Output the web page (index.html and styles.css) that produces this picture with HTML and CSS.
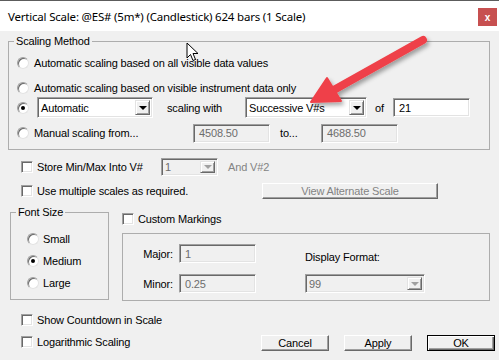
FILE: index.html
```html
<!DOCTYPE html>
<html lang="en">
<head>
  <meta charset="UTF-8">
  <title>Vertical Scale</title>
  <link rel="stylesheet" href="styles.css">
</head>
<body>

  <div class="window">
    <div class="titlebar">
      <span class="title">Vertical Scale: @ES# (5m*) (Candlestick) 624 bars (1 Scale)</span>
      <span class="close">x</span>
    </div>

    <div class="dialog">
      <fieldset class="group scaling">
        <legend>Scaling Method</legend>
        <div class="opt first"><span class="radio"></span>Automatic scaling based on all visible data values</div>
        <div class="opt second"><span class="radio"></span>Automatic scaling based on visible instrument data only</div>
        <div class="opt combo">
          <span class="radio on"></span>
          <div class="select method"><span class="val">Automatic</span><span class="drop"></span></div>
          <span class="lbl with">scaling with</span>
          <div class="select succ"><span class="val">Successive V#s</span><span class="drop"></span></div>
          <span class="lbl of">of</span>
          <div class="field count">21</div>
        </div>
        <div class="opt">
          <span class="radio"></span>
          <span class="lbl manual">Manual scaling from...</span>
          <div class="field off">4508.50</div>
          <span class="lbl to">to...</span>
          <div class="field off">4688.50</div>
        </div>
      </fieldset>

      <div class="checkrow store">
        <span class="check"></span>
        <span class="lbl storelbl">Store Min/Max Into V#</span>
        <div class="select off small"><span class="val">1</span><span class="drop"></span></div>
        <span class="muted and">And V#2</span>
      </div>
      <div class="checkrow multi">
        <span class="check"></span>
        <span class="lbl multilbl">Use multiple scales as required.</span>
        <div class="btn wide muted">View Alternate Scale</div>
      </div>

      <div class="middle">
        <fieldset class="group fontsize">
          <legend>Font Size</legend>
          <div class="fopt"><span class="radio"></span>Small</div>
          <div class="fopt"><span class="radio on"></span>Medium</div>
          <div class="fopt"><span class="radio"></span>Large</div>
        </fieldset>

        <div class="markings">
          <div class="checkrow plain"><span class="check"></span>Custom Markings</div>
          <div class="panel">
            <div class="marks">
              <div class="mrow"><span class="mlbl">Major:</span><div class="field off">1</div></div>
              <div class="mrow"><span class="mlbl">Minor:</span><div class="field off">0.25</div></div>
            </div>
            <div class="format">
              <div class="flbl">Display Format:</div>
              <div class="select off fmt"><span class="val">99</span><span class="drop"></span></div>
            </div>
          </div>
        </div>
      </div>

      <div class="bottom">
        <div class="checks">
          <div class="checkrow"><span class="check"></span>Show Countdown in Scale</div>
          <div class="checkrow log"><span class="check"></span>Logarithmic Scaling</div>
        </div>
        <div class="buttons">
          <div class="btn">Cancel</div>
          <div class="btn">Apply</div>
          <div class="btn default">OK</div>
        </div>
      </div>
    </div>

    <!-- annotation arrow drawn over the dialog -->
    <svg class="overlay" width="499" height="360" viewBox="0 0 499 360">
      <defs>
        <filter id="shade" x="-20%" y="-20%" width="150%" height="160%">
          <feDropShadow dx="2" dy="3" stdDeviation="2" flood-color="#000" flood-opacity="0.35"/>
        </filter>
      </defs>
      <g filter="url(#shade)" fill="#ef4148" stroke="#ef4148">
        <line x1="423" y1="40" x2="332" y2="91" stroke-width="8" stroke-linecap="round"/>
        <polygon points="311,102 327,78 341,101" stroke-width="2" stroke-linejoin="round"/>
      </g>
    </svg>

    <svg class="cursor" width="14" height="21" viewBox="0 0 14 21">
      <path d="M1 1 L1 16 L4.5 12.5 L7 18.5 L9.5 17.5 L7 11.5 L12 11.5 Z" fill="#fff" stroke="#000" stroke-width="1" stroke-linejoin="miter"/>
    </svg>
  </div>

</body>
</html>
```

FILE: styles.css
```css
body {
  margin: 0;
  font-family: 'Liberation Sans', Arial, sans-serif;
  font-size: 11px;
  letter-spacing: -0.15px;
  color: #000;
  background: #f0f0f0;
}

.window {
  position: relative;
  width: 499px;
  height: 360px;
  overflow: hidden;
  background: #f0f0f0;
}

/* title bar */
.titlebar {
  height: 30px;
  border-top: 1px solid #5c5c5c;
  background: #fff;
  display: flex;
  align-items: center;
  justify-content: space-between;
  padding-left: 8px;
}

.title {
  font-family: 'Noto Sans', sans-serif;
  font-size: 11.5px;
  letter-spacing: -0.2px;
}

.close {
  width: 19px;
  height: 18px;
  margin: 2px 2px 0 0;
  background: #c75050;
  color: #fff;
  font-weight: bold;
  font-size: 10px;
  display: flex;
  align-items: center;
  justify-content: center;
}

.dialog {
  padding: 4px 9px 0 8px;
}

/* group boxes */
.group {
  margin: 0;
  border: 1px solid #adadad;
  min-width: 0;
}

.group legend {
  padding: 0 2px;
  line-height: 13px;
}

.scaling {
  padding: 5px 8px 6px 8px;
}

.scaling legend {
  margin-left: -3px;
}

.opt {
  display: flex;
  align-items: center;
  height: 20px;
  margin-top: 5px;
}

.opt.first {
  margin-top: 0;
}

.opt.second {
  height: 19px;
}

.opt.combo {
  height: 21px;
  margin-top: 0;
}

.opt .radio {
  margin-right: 5px;
}

.opt.combo .radio {
  margin-right: 8px;
}

.lbl {
  flex: none;
}

.with { margin-left: 14px; width: 78px; }
.of { margin-left: 8px; width: 18px; }
.manual { width: 159px; }
.to { margin-left: 10px; width: 41px; }
.storelbl { width: 124px; }
.multilbl { width: 225px; }

/* classic controls */
.radio {
  position: relative;
  flex: none;
  box-sizing: border-box;
  width: 12px;
  height: 12px;
  border-radius: 50%;
  background: #fff;
  border: 1px solid;
  border-color: #a0a0a0 #e3e3e3 #e3e3e3 #a0a0a0;
  box-shadow: inset 1px 1px #696969;
}

.radio.on::after {
  content: "";
  position: absolute;
  left: 3px;
  top: 3px;
  width: 4px;
  height: 4px;
  border-radius: 50%;
  background: #000;
}

.check {
  flex: none;
  box-sizing: border-box;
  width: 12px;
  height: 12px;
  margin-right: 4px;
  background: #fff;
  border: 1px solid;
  border-color: #a0a0a0 #fff #fff #a0a0a0;
  box-shadow: inset 1px 1px #696969, inset -1px -1px #e3e3e3;
}

.select {
  flex: none;
  display: flex;
  box-sizing: border-box;
  padding: 2px;
  background: #fff;
  border: 1px solid;
  border-color: #a0a0a0 #fff #fff #a0a0a0;
  box-shadow: inset 1px 1px #696969, inset -1px -1px #e3e3e3;
}

.select .val {
  flex: 1;
  display: flex;
  align-items: center;
  padding-left: 1px;
}

.select .drop {
  width: 15px;
  box-sizing: border-box;
  background: #f0f0f0;
  border: 1px solid;
  border-color: #e3e3e3 #696969 #696969 #e3e3e3;
  box-shadow: inset 1px 1px #fff, inset -1px -1px #a0a0a0;
  display: flex;
  align-items: center;
  justify-content: center;
}

.select .drop::after {
  content: "";
  border-top: 4px solid #000;
  border-left: 4px solid transparent;
  border-right: 4px solid transparent;
}

.select.off {
  background: #f0f0f0;
  color: #6d6d6d;
}

.select.off .drop::after {
  border-top-color: #a0a0a0;
}

.method { width: 116px; height: 21px; }
.succ { width: 122px; height: 21px; }
.small { width: 57px; height: 18px; }
.fmt { width: 120px; height: 19px; }

.field {
  flex: none;
  display: flex;
  align-items: center;
  box-sizing: border-box;
  width: 77px;
  height: 19px;
  padding-left: 5px;
  background: #fff;
  border: 1px solid;
  border-color: #a0a0a0 #fff #fff #a0a0a0;
  box-shadow: inset 1px 1px #696969, inset -1px -1px #e3e3e3;
}

.field.off {
  background: #f0f0f0;
  color: #6d6d6d;
}

.btn {
  flex: none;
  display: flex;
  align-items: center;
  justify-content: center;
  box-sizing: border-box;
  width: 68px;
  height: 16px;
  background: #f0f0f0;
  border: 1px solid;
  border-color: #fff #696969 #696969 #fff;
  box-shadow: inset -1px -1px #a0a0a0;
}

.btn.default {
  border-color: #000;
  box-shadow: inset 1px 1px #fff, inset -1px -1px #696969, inset -2px -2px #a0a0a0;
}

.btn.wide {
  width: 176px;
}

.muted {
  color: #838383;
}

/* checkbox rows */
.checkrow {
  display: flex;
  align-items: center;
  height: 20px;
  padding-left: 13px;
}

.checkrow.plain {
  padding-left: 0;
}

.store { margin-top: 7px; }
.multi { margin-top: 4px; }
.and { margin-left: 10px; }

/* font size + markings */
.middle {
  display: flex;
  align-items: flex-start;
  margin-top: 5px;
}

.fontsize {
  box-sizing: border-box;
  width: 99px;
  margin-left: 2px;
  padding: 9px 0 5px 16px;
}

.fontsize legend {
  margin-left: -11px;
}

.fopt {
  display: flex;
  align-items: center;
  height: 22px;
}

.fopt .radio {
  margin-right: 4px;
}

.markings {
  width: 368px;
  margin: 3px 0 0 13px;
}

.panel {
  display: flex;
  box-sizing: border-box;
  height: 68px;
  margin-top: 4px;
  padding-top: 10px;
  border: 1px solid #adadad;
}

.mrow {
  display: flex;
  align-items: center;
  height: 19px;
  margin-bottom: 11px;
}

.mlbl {
  width: 50px;
  margin-right: 6px;
  text-align: right;
}

.format {
  margin-left: 49px;
}

.flbl {
  height: 19px;
  margin-top: 3px;
  margin-bottom: 8px;
  display: flex;
  align-items: center;
}

/* bottom */
.bottom {
  display: flex;
  margin-top: 9px;
  margin-right: -5px;
}

.checkrow.log {
  margin-top: 2px;
}

.buttons {
  display: flex;
  gap: 15px;
  align-self: flex-end;
  margin: 0 0 1px auto;
}

.overlay {
  position: absolute;
  left: 0;
  top: 0;
  pointer-events: none;
}

.cursor {
  position: absolute;
  left: 186px;
  top: 42px;
}
```
